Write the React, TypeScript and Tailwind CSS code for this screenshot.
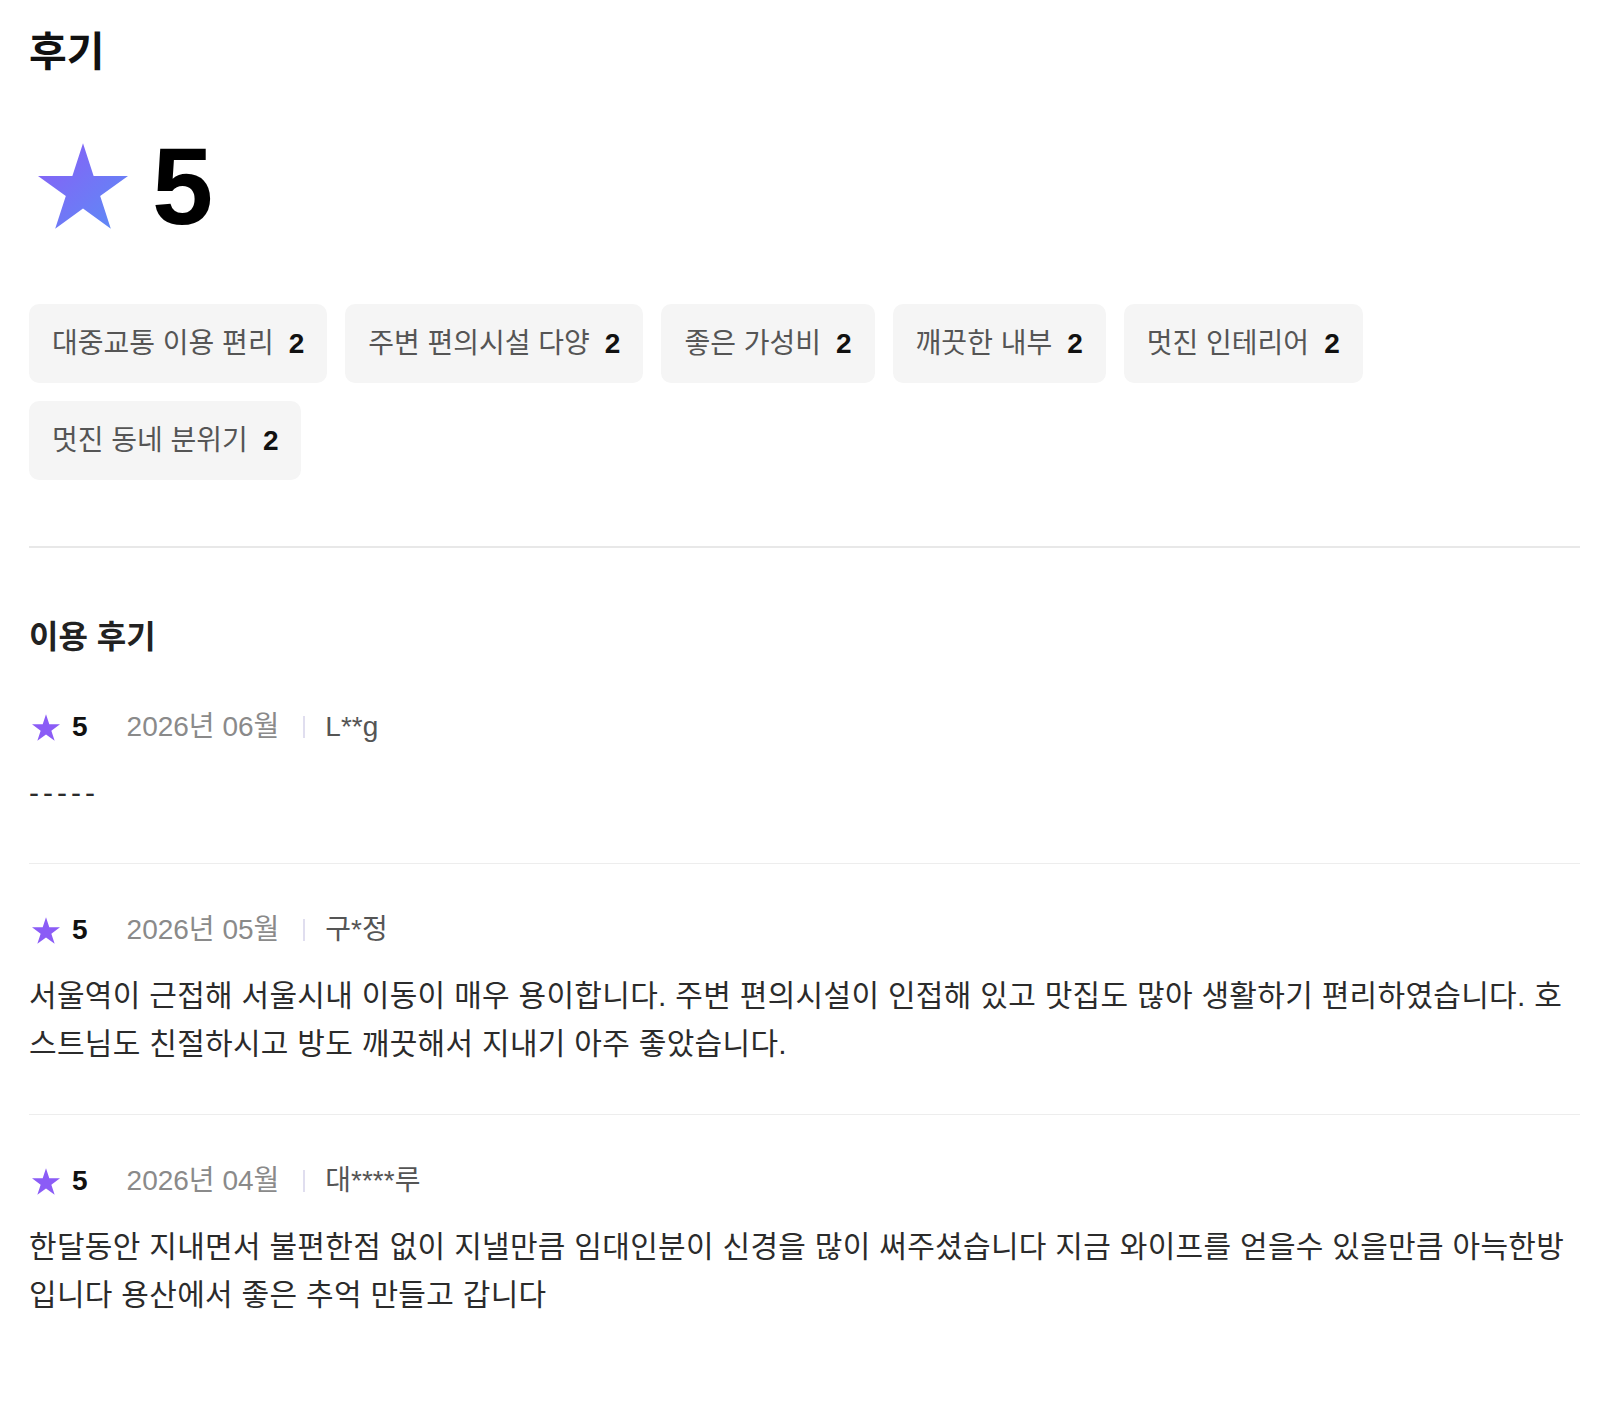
const STAR_POINTS =
  "47.55,0 58.78,34.55 95.1,34.55 65.71,55.9 76.94,90.45 47.55,69.1 18.16,90.45 29.39,55.9 0,34.55 36.32,34.55";

const tags = [
  { label: "대중교통 이용 편리", count: 2 },
  { label: "주변 편의시설 다양", count: 2 },
  { label: "좋은 가성비", count: 2 },
  { label: "깨끗한 내부", count: 2 },
  { label: "멋진 인테리어", count: 2 },
  { label: "멋진 동네 분위기", count: 2 },
];

const reviews = [
  { rating: 5, date: "2026년 06월", name: "L**g", body: "-----" },
  {
    rating: 5,
    date: "2026년 05월",
    name: "구*정",
    body: "서울역이 근접해 서울시내 이동이 매우 용이합니다. 주변 편의시설이 인접해 있고 맛집도 많아 생활하기 편리하였습니다. 호스트님도 친절하시고 방도 깨끗해서 지내기 아주 좋았습니다.",
  },
  {
    rating: 5,
    date: "2026년 04월",
    name: "대****루",
    body: "한달동안 지내면서 불편한점 없이 지낼만큼 임대인분이 신경을 많이 써주셨습니다 지금 와이프를 얻을수 있을만큼 아늑한방입니다 용산에서 좋은 추억 만들고 갑니다",
  },
];

function BigStar() {
  return (
    <svg viewBox="0 0 95.1 90.45" className="h-[86px] w-[90px]">
      <defs>
        <linearGradient id="bigStarFill" x1="0" y1="0" x2="1" y2="1">
          <stop offset="0%" stopColor="#8b5cf6" />
          <stop offset="100%" stopColor="#5b8df6" />
        </linearGradient>
      </defs>
      <polygon points={STAR_POINTS} fill="url(#bigStarFill)" />
    </svg>
  );
}

function SmallStar() {
  return (
    <svg viewBox="0 0 95.1 90.45" className="h-[27px] w-[28px]">
      <polygon points={STAR_POINTS} fill="#8b5cf6" />
    </svg>
  );
}

function TagChip({ label, count }: { label: string; count: number }) {
  return (
    <div className="flex h-[79px] items-center gap-[15px] rounded-[10px] bg-[#f5f5f5] px-[23px] text-[28px]">
      <span className="text-[#555555]">{label}</span>
      <span className="font-bold text-[#111111]">{count}</span>
    </div>
  );
}

function ReviewItem({
  review,
  last,
}: {
  review: (typeof reviews)[number];
  last: boolean;
}) {
  const dashes = review.body === "-----";
  return (
    <div className={`pt-[51px] pb-[46px] ${last ? "" : "border-b border-[#ededed]"}`}>
      <div className="flex h-[30px] items-center text-[28px]">
        <div className="ml-[3px]">
          <SmallStar />
        </div>
        <span className="ml-[12px] font-bold text-[#111111]">{review.rating}</span>
        <span className="ml-[39px] text-[#8a8a8a]">{review.date}</span>
        <span className="ml-[24px] h-[22px] w-[2px] bg-[#e0deef]" />
        <span className="ml-[20px] text-[#555555]">{review.name}</span>
      </div>
      <p
        className={`mt-[27px] text-[30px] leading-[48px] text-[#2b2b2b] ${
          dashes ? "tracking-[4px]" : "tracking-[0.3px]"
        }`}
      >
        {review.body}
      </p>
    </div>
  );
}

export default function App() {
  return (
    <div className="min-h-[1410px] bg-white font-['Liberation_Sans','Noto_Sans_CJK_KR',sans-serif]">
      <div className="w-[1580px] pl-[29px] pt-[28px]">
        <h1 className="text-[41px] font-bold leading-[48px] text-[#111111]">후기</h1>

        <div className="mt-[56px] flex h-[108px] items-center">
          <div className="ml-[9px]">
            <BigStar />
          </div>
          <span className="ml-[24px] text-[110px] font-bold leading-none text-[#000000]">5</span>
        </div>

        <div className="mt-[64px] flex flex-wrap gap-[18px]">
          {tags.map((t) => (
            <TagChip key={t.label} label={t.label} count={t.count} />
          ))}
        </div>

        <div className="mt-[66px] h-[2px] bg-[#e8e8e8]" />

        <h2 className="mt-[65px] text-[32px] font-bold leading-[48px] text-[#222222]">이용 후기</h2>

        <div>
          {reviews.map((r, i) => (
            <ReviewItem key={r.date} review={r} last={i === reviews.length - 1} />
          ))}
        </div>
      </div>
    </div>
  );
}
